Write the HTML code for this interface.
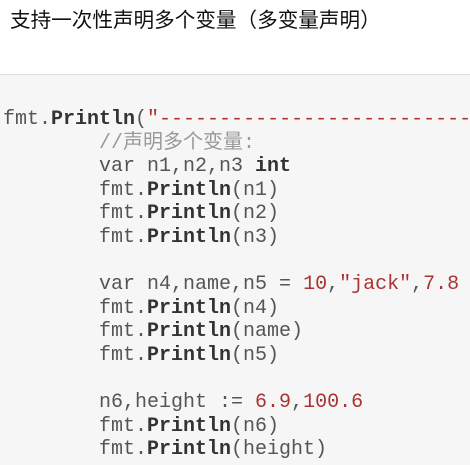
<!DOCTYPE html>
<html><head><meta charset="utf-8"><style>
body{margin:0;width:470px;height:464px;overflow:hidden;background:#fff;position:relative;}
.title{position:absolute;left:10px;top:3px;font:20.6px "Liberation Sans","Noto Sans CJK SC",sans-serif;color:#111;}
.code{position:absolute;left:0;top:74px;width:470px;height:390px;background:#f6f6f6;border-top:1px solid #ddd;overflow:hidden;}
pre{position:absolute;left:3px;top:33px;margin:0;font:20px/23.6px "Liberation Mono","Noto Sans CJK SC",monospace;color:#555;}
b{color:#333}
.r{color:#a33}
.c{color:#999}
</style></head><body>
<div class="title">支持一次性声明多个变量（多变量声明）</div>
<div class="code"><pre>fmt.<b>Println</b>(<span class="r">"-------------------------------</span>
        <span class="c">//声明多个变量:</span>
        var n1,n2,n3 <b>int</b>
        fmt.<b>Println</b>(n1)
        fmt.<b>Println</b>(n2)
        fmt.<b>Println</b>(n3)

        var n4,name,n5 = <span class="r">10</span>,<span class="r">"jack"</span>,<span class="r">7.8</span>
        fmt.<b>Println</b>(n4)
        fmt.<b>Println</b>(name)
        fmt.<b>Println</b>(n5)

        n6,height := <span class="r">6.9</span>,<span class="r">100.6</span>
        fmt.<b>Println</b>(n6)
        fmt.<b>Println</b>(height)</pre></div>
</body></html>
